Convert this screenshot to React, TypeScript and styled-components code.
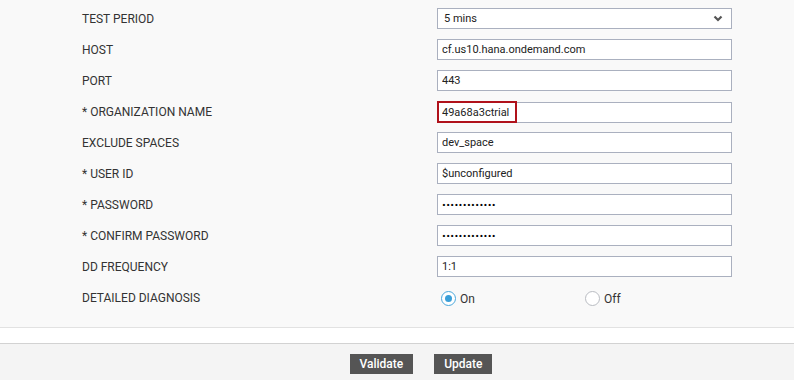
import React from 'react';
import styled, { createGlobalStyle } from 'styled-components';

const GlobalStyle = createGlobalStyle`
  html, body {
    margin: 0;
    padding: 0;
    background: #f4f4f4;
    font-family: Roboto, "Liberation Sans", Arial, sans-serif;
  }
`;

const Page = styled.div`
  width: 794px;
  height: 380px;
  display: flex;
  flex-direction: column;
  overflow: hidden;
`;

const FormSection = styled.div`
  background: #f9f9f9;
  padding: 8px 0 19px 82px;
  border-bottom: 1px solid #e2e2e2;
  display: grid;
  grid-template-columns: 355px 295px;
  grid-auto-rows: 21px;
  row-gap: 10px;
  align-items: center;
`;

const Spacer = styled.div`
  height: 15px;
  background: #ffffff;
  border-bottom: 1px solid #d2d2d2;
`;

const Label = styled.div`
  font-size: 12px;
  color: #333;
  line-height: 21px;
  padding-top: 2px;
`;

const TextInput = styled.input`
  box-sizing: border-box;
  width: 295px;
  height: 21px;
  margin: 0;
  padding: 0 4px;
  border: 1px solid #aab0bf;
  border-radius: 0;
  background: #fff;
  font-family: Roboto, "Liberation Sans", Arial, sans-serif;
  font-size: 11px;
  color: #222;
  outline: none;
`;

const Field = styled.div`
  position: relative;
  width: 295px;
  height: 21px;
`;

const Highlight = styled.div`
  position: absolute;
  left: 0;
  top: 0;
  width: 80px;
  height: 22px;
  box-sizing: border-box;
  border: 2px solid #b0121b;
  pointer-events: none;
`;

const SelectBox = styled.div`
  box-sizing: border-box;
  width: 295px;
  height: 21px;
  border: 1px solid #aab0bf;
  background: #fff;
  display: flex;
  align-items: center;
  justify-content: space-between;
  padding: 0 8px 0 6px;
  font-size: 11px;
  color: #222;
`;

const Dots = styled.div`
  box-sizing: border-box;
  width: 295px;
  height: 21px;
  border: 1px solid #aab0bf;
  background: #fff;
  display: flex;
  align-items: center;
  padding: 0 4px;
  font-size: 12px;
  letter-spacing: 0.3px;
  color: #000;
  font-weight: 900;
`;

const RadioGroup = styled.div`
  display: flex;
  align-items: center;
  padding: 2px 0 0 4px;
`;

const RadioOption = styled.label`
  width: 144px;
  display: flex;
  align-items: center;
  gap: 4px;
  font-size: 12px;
  color: #333;
`;

const RadioCircle = styled.span<{ $checked?: boolean }>`
  box-sizing: border-box;
  width: 15px;
  height: 15px;
  border-radius: 50%;
  border: 1px solid ${(p) => (p.$checked ? '#4aa8dc' : '#b9bcc2')};
  background: #fff;
  display: flex;
  align-items: center;
  justify-content: center;

  &::after {
    content: '';
    width: 7px;
    height: 7px;
    border-radius: 50%;
    background: #3a9fd8;
    display: ${(p) => (p.$checked ? 'block' : 'none')};
  }
`;

const Footer = styled.div`
  flex: 1;
  background: #f4f4f4;
  display: flex;
  justify-content: center;
  align-items: flex-start;
  gap: 21px;
  padding: 10px 0 0 48px;
`;

const Button = styled.button`
  height: 20px;
  padding: 0 10px;
  border: none;
  border-radius: 0;
  background: #555555;
  color: #fff;
  font-family: Roboto, "Liberation Sans", Arial, sans-serif;
  font-weight: 500;
  font-size: 12px;
  cursor: pointer;
`;

const Chevron = () => (
  <svg width="10" height="7" viewBox="0 0 10 7">
    <path d="M1.5 1.5 L5 5 L8.5 1.5" fill="none" stroke="#555" strokeWidth="2.2" />
  </svg>
);

const rows: { label: string; value: string }[] = [
  { label: 'HOST', value: 'cf.us10.hana.ondemand.com' },
  { label: 'PORT', value: '443' },
];

export default function App() {
  return (
    <Page>
      <GlobalStyle />
      <FormSection>
        <Label>TEST PERIOD</Label>
        <SelectBox>
          <span>5 mins</span>
          <Chevron />
        </SelectBox>

        {rows.map((r) => (
          <React.Fragment key={r.label}>
            <Label>{r.label}</Label>
            <TextInput readOnly value={r.value} />
          </React.Fragment>
        ))}

        <Label>* ORGANIZATION NAME</Label>
        <Field>
          <TextInput readOnly value="49a68a3ctrial" />
          <Highlight />
        </Field>

        <Label>EXCLUDE SPACES</Label>
        <TextInput readOnly value="dev_space" />

        <Label>* USER ID</Label>
        <TextInput readOnly value="$unconfigured" />

        <Label>* PASSWORD</Label>
        <Dots>·············</Dots>

        <Label>* CONFIRM PASSWORD</Label>
        <Dots>·············</Dots>

        <Label>DD FREQUENCY</Label>
        <TextInput readOnly value="1:1" />

        <Label>DETAILED DIAGNOSIS</Label>
        <RadioGroup>
          <RadioOption>
            <RadioCircle $checked />
            On
          </RadioOption>
          <RadioOption>
            <RadioCircle />
            Off
          </RadioOption>
        </RadioGroup>
      </FormSection>
      <Spacer />
      <Footer>
        <Button>Validate</Button>
        <Button>Update</Button>
      </Footer>
    </Page>
  );
}
